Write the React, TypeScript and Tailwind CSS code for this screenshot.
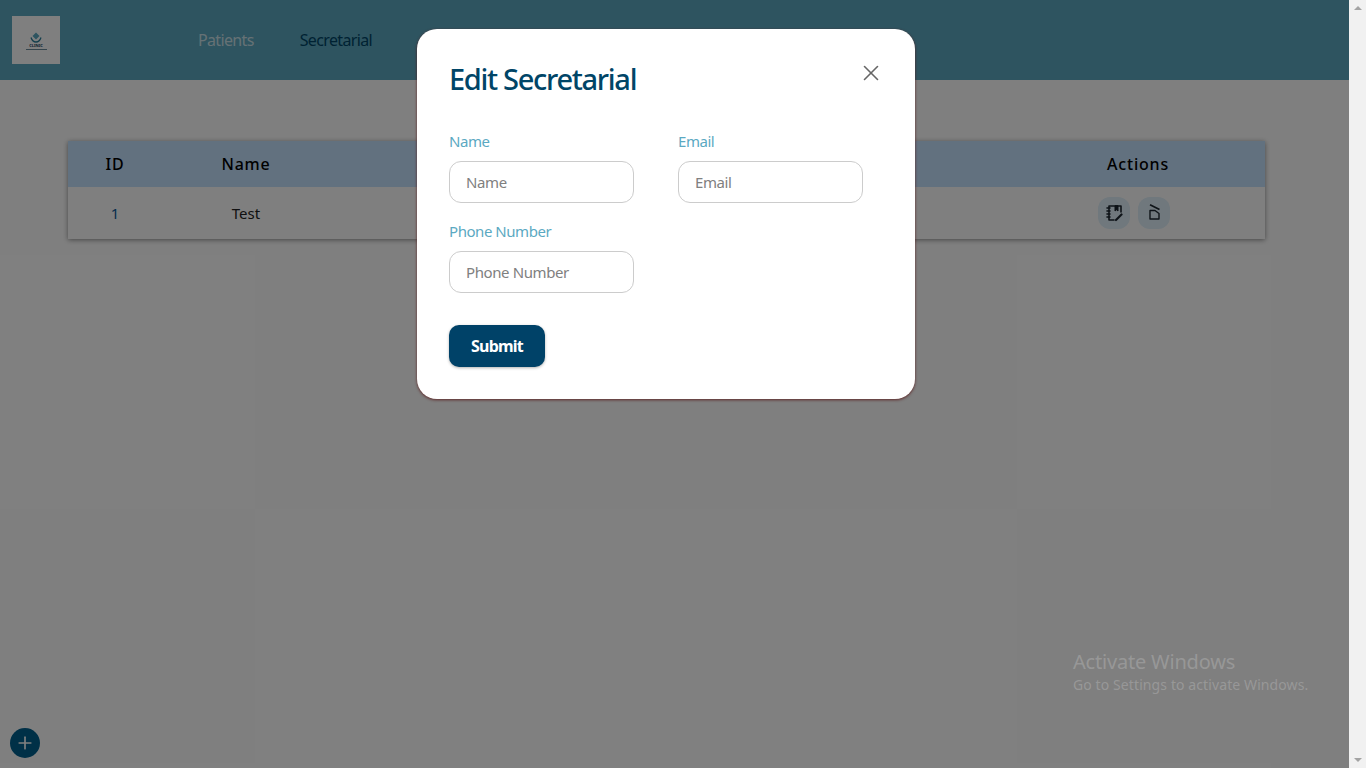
import { Plus, X } from 'lucide-react';

const font = { fontFamily: '"Noto Sans", sans-serif' };

function NotebookIcon() {
  return (
    <svg width="18" height="18" viewBox="0 0 18 18" fill="none" stroke="#1d2730" strokeLinecap="round" strokeLinejoin="round">
      <path d="M4 2 H16 V8 M4 2 V16 H9" strokeWidth="1.6" />
      <path d="M10 2 V7 L11.5 5.8 L13 7 V2 Z" fill="#1d2730" strokeWidth="1" />
      <path d="M2 4 H5 M2 7 H5 M2 10 H5 M2 13 H5" strokeWidth="1.6" />
      <path d="M11 16 L16.5 10.5" strokeWidth="2.2" />
    </svg>
  );
}

function TrashTilted() {
  return (
    <svg width="16" height="18" viewBox="0 0 16 18" fill="none" stroke="#1d2730" strokeWidth="1.4" strokeLinejoin="round">
      <path d="M4 6.5 H9 L13 9.5 V15 H4 Z" />
      <path d="M4 0.8 L13.5 5.5" strokeWidth="1.6" />
    </svg>
  );
}

function Field({ label }: { label: string }) {
  return (
    <div className="flex flex-col">
      <label className="text-[15px] leading-[20px] tracking-[-0.45px] text-[#5ba9c2] mb-[10px]">{label}</label>
      <input
        placeholder={label}
        className="w-[185px] h-[42px] rounded-xl border border-[#cccccc] bg-white px-4 text-[15px] tracking-[-0.4px] text-gray-700 placeholder:text-[#808080] outline-none"
      />
    </div>
  );
}

export default function App() {
  return (
    <div className="flex h-screen w-full overflow-hidden bg-white" style={font}>
      <div className="relative flex-1 flex flex-col bg-white">
        {/* Navbar */}
        <header className="h-20 bg-[#5ca8c0] flex items-center pl-3">
          <div className="w-12 h-12 bg-white flex flex-col items-center justify-center pt-[2px]">
            <svg width="12" height="11" viewBox="0 0 12 11" fill="none">
              <path d="M6 0.5 L9.5 4 L6 7.5 L2.5 4 Z" fill="#5ca8c0" />
              <path d="M1 5.5 Q2.5 10 6 10 Q9.5 10 11 5.5" stroke="#2a7f9c" strokeWidth="1.3" />
            </svg>
            <span className="text-[4px] leading-[4px] mt-[1px] font-bold text-[#12405a]">CLINIC</span>
            <span className="w-[21px] h-px mt-[1px] bg-[#6a8a9a]" />
          </div>
          <nav className="flex items-center gap-[46px] ml-[138px] text-[16px] tracking-[-0.65px]">
            <a className="text-white/70">Patients</a>
            <a className="text-[#004567]">Secretarial</a>
          </nav>
        </header>

        {/* Table */}
        <main className="pt-[61px] pl-[68px] pr-[84px]">
          <div className="shadow-[0_1px_5px_rgba(0,0,0,0.45)]">
            <div className="h-[46px] bg-[#c5e3ff] flex items-center text-[16px] font-medium tracking-[0.8px] text-black">
              <div className="w-[94px] text-center">ID</div>
              <div className="w-[168px] text-center">Name</div>
              <div className="flex-1" />
              <div className="w-[254px] text-center">Actions</div>
            </div>
            <div className="h-[52px] bg-white flex items-center text-[15px] text-[#222222]">
              <div className="w-[94px] text-center text-[#0a5a9c]">1</div>
              <div className="w-[168px] text-center">Test</div>
              <div className="flex-1" />
              <div className="w-[254px] flex justify-center gap-2 pr-[9px]">
                <button className="w-8 h-8 rounded-xl bg-[#e0f0fa] flex items-center justify-center">
                  <NotebookIcon />
                </button>
                <button className="w-8 h-8 rounded-xl bg-[#e0f0fa] flex items-center justify-center">
                  <TrashTilted />
                </button>
              </div>
            </div>
          </div>
        </main>

        {/* FAB */}
        <button className="absolute left-[10px] bottom-[10px] w-[30px] h-[30px] rounded-full bg-[#00608f] flex items-center justify-center">
          <Plus size={20} color="#ffffff" strokeWidth={2} />
        </button>

        {/* Overlay + modal */}
        <div className="absolute inset-0 bg-black/50 pl-[417px] pt-[29px]">
          <div className="relative w-[498px] h-[370px] rounded-[20px] bg-white shadow-[0_1px_3px_rgba(90,30,30,0.9)] pl-8 pt-[28px]">
            <h2 className="text-[29px] leading-[44px] font-medium tracking-[-1.3px] text-[#004567]">Edit Secretarial</h2>
            <button className="absolute top-[31px] right-[31px] text-[#666666]">
              <X size={26} strokeWidth={1.5} />
            </button>
            <div className="mt-[30px] grid grid-cols-[185px_185px] gap-x-[44px] gap-y-[18px]">
              <Field label="Name" />
              <Field label="Email" />
              <Field label="Phone Number" />
            </div>
            <button className="mt-8 w-[96px] h-[42px] rounded-[10px] bg-[#004268] text-white text-[16px] font-bold tracking-[-0.8px] shadow-[0_1px_3px_rgba(0,0,0,0.3)]">
              Submit
            </button>
          </div>
        </div>

        {/* Windows watermark */}
        <div className="absolute left-[1073px] top-[649px] text-white/20 pointer-events-none">
          <div className="text-[20px] leading-[26px] tracking-[-0.2px]">Activate Windows</div>
          <div className="text-[14px] leading-[20px] tracking-[0.1px]">Go to Settings to activate Windows.</div>
        </div>
      </div>

      {/* Scrollbar */}
      <div className="w-[17px] bg-[#f1f1f1] flex flex-col justify-between items-center py-[6px]">
        <span className="w-0 h-0 border-x-[4px] border-x-transparent border-b-[4px] border-b-[#a3a3a3]" />
        <span className="w-0 h-0 border-x-[4px] border-x-transparent border-t-[4px] border-t-[#a3a3a3]" />
      </div>
    </div>
  );
}
